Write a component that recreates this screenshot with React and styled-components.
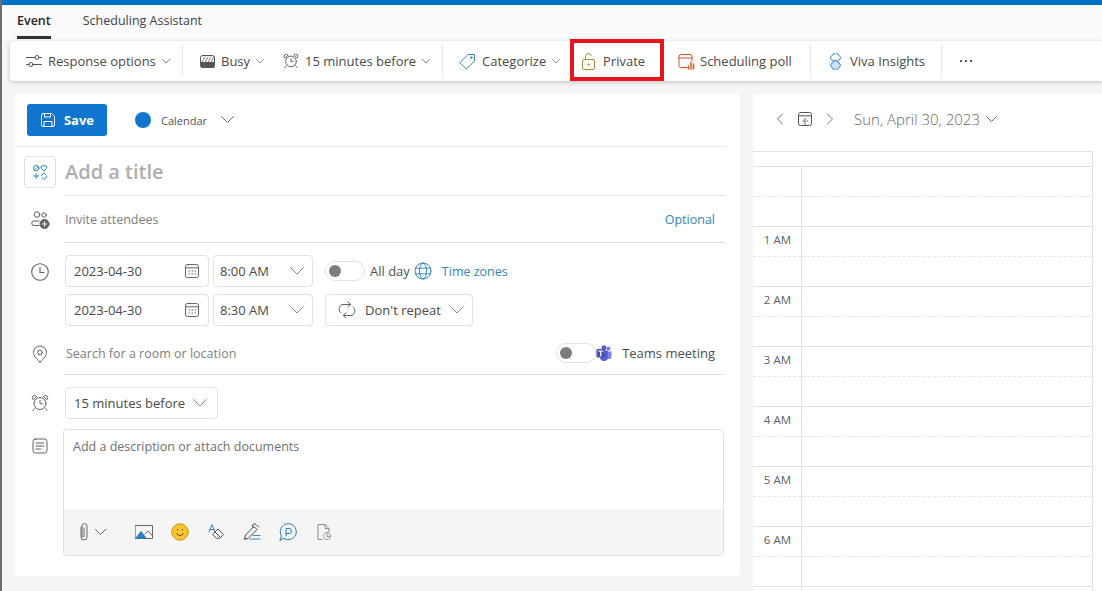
import React from 'react';
import styled, { createGlobalStyle } from 'styled-components';

const GlobalStyle = createGlobalStyle`
  html, body {
    margin: 0;
    padding: 0;
    background: #f5f5f5;
  }
  body {
    font-family: 'Open Sans', 'Noto Sans', sans-serif;
    color: #424242;
  }
`;

const Page = styled.div`
  width: 1102px;
  height: 591px;
  overflow: hidden;
  box-sizing: border-box;
  border-left: 2px solid #6d6d6d;
  background: #f5f5f5;
`;

const BlueBar = styled.div`
  height: 5px;
  background: #0072c6;
`;

const Header = styled.div`
  background: #fafafa;
  height: 36px;
  display: flex;
  padding-left: 15px;
  gap: 32px;
`;

const Tab = styled.div`
  height: 31px;
  line-height: 32px;
  font-size: 12.5px;
  color: ${p => (p.$active ? '#242424' : '#424242')};
  font-weight: ${p => (p.$active ? 600 : 400)};
  border-bottom: ${p => (p.$active ? '3px solid #333' : '3px solid transparent')};
`;

const Toolbar = styled.div`
  margin-left: 8px;
  height: 40px;
  background: #fff;
  border-radius: 4px 0 0 4px;
  box-shadow: 0 1px 4px rgba(0, 0, 0, 0.22);
  display: flex;
  align-items: center;
  padding-left: 16px;
  position: relative;
`;

const ToolItem = styled.div`
  display: flex;
  align-items: center;
  height: 100%;
  gap: 6px;
  font-size: 13px;
  color: #4a4a4a;
  white-space: nowrap;
  width: ${p => p.$w}px;
  margin-left: ${p => p.$ml || 0}px;
  flex: none;
`;

const Highlighted = styled(ToolItem)`
  position: relative;
  &::after {
    content: '';
    position: absolute;
    left: -12px;
    width: 94px;
    top: -2px;
    bottom: 0;
    box-sizing: border-box;
    border: 4px solid #e8141f;
  }
`;

const ToolSep = styled.div`
  width: 1px;
  height: 32px;
  background: #e6e6e6;
  flex: none;
  margin-left: ${p => p.$ml || 0}px;
`;

const Main = styled.div`
  display: flex;
  padding: 13px 0 0 13px;
  gap: 13px;
  align-items: flex-start;
`;

const FormCard = styled.div`
  width: 725px;
  height: 482px;
  background: #fff;
  border-radius: 4px;
  flex: none;
`;

const SaveRow = styled.div`
  height: 52px;
  box-sizing: border-box;
  padding: 10px 0 0 12px;
  border-bottom: 1px solid #e6e6e6;
  display: flex;
  align-items: flex-start;
  width: 710px;
  height: 53px;
`;

const SaveButton = styled.button`
  width: 80px;
  height: 32px;
  border: 0;
  border-radius: 3px;
  background: #0f75cf;
  color: #fff;
  font: 700 13px 'Open Sans', sans-serif;
  display: flex;
  align-items: center;
  justify-content: center;
  gap: 8px;
  padding: 0;
`;

const CalendarPick = styled.div`
  display: flex;
  align-items: center;
  height: 32px;
  margin-left: 28px;
  font-size: 11px;
  color: #555;
`;

const Dot = styled.span`
  width: 16px;
  height: 16px;
  border-radius: 50%;
  background: #0f75cf;
  margin-right: 10px;
`;

const Row = styled.div`
  display: flex;
  align-items: ${p => p.$align || 'center'};
`;

const IconCol = styled.div`
  width: 49px;
  flex: none;
  display: flex;
  justify-content: center;
  color: #616161;
`;

const TitleIcon = styled.div`
  width: 32px;
  height: 32px;
  box-sizing: border-box;
  border: 1px solid #e0e0e0;
  border-radius: 4px;
  display: flex;
  align-items: center;
  justify-content: center;
  margin-left: 1px;
`;

const LineField = styled.div`
  width: 661px;
  height: ${p => p.$h}px;
  box-sizing: border-box;
  border-bottom: 1px solid #e0e0e0;
  display: flex;
  align-items: center;
  justify-content: space-between;
  padding: 0 10px 0 1px;
`;

const TitleText = styled.div`
  font-size: 20px;
  font-weight: 600;
  color: #aeaeae;
`;

const Placeholder = styled.div`
  font-size: 12.5px;
  color: #808080;
  margin-left: ${p => p.$ml || 0}px;
`;

const LinkText = styled.div`
  font-size: 12.5px;
  color: #2f86bd;
`;

const Field = styled.div`
  width: ${p => p.$w}px;
  height: 32px;
  box-sizing: border-box;
  border: 1px solid #e2e2e2;
  border-radius: 4px;
  display: flex;
  align-items: center;
  justify-content: space-between;
  padding: 0 ${p => p.$pr || 8}px 0 ${p => p.$pl || 8}px;
  font-size: 13px;
  color: #4a4a4a;
  flex: none;
  margin-left: ${p => p.$ml || 0}px;
`;

const DateRows = styled.div`
  display: flex;
  flex-direction: column;
  gap: 7px;
  margin-top: 12px;
`;

const DateRow = styled.div`
  display: flex;
  align-items: center;
  gap: 4px;
  padding-left: 1px;
`;

const Toggle = styled.div`
  width: 40px;
  height: 20px;
  box-sizing: border-box;
  border: 1px solid #e2e2e2;
  border-radius: 10px;
  display: flex;
  align-items: center;
  padding-left: 3px;
  flex: none;
  margin-left: ${p => p.$ml || 0}px;
  &::before {
    content: '';
    width: 12px;
    height: 12px;
    border-radius: 50%;
    background: #7d7d7d;
  }
`;

const Plain = styled.div`
  font-size: 13px;
  color: #505050;
  margin-left: ${p => p.$ml || 0}px;
  white-space: nowrap;
`;

const RightGroup = styled.div`
  display: flex;
  align-items: center;
`;

const DescBox = styled.div`
  width: 661px;
  height: 127px;
  box-sizing: border-box;
  border: 1px solid #e0e0e0;
  border-radius: 4px;
  margin-left: -1px;
  display: flex;
  flex-direction: column;
  overflow: hidden;
`;

const DescText = styled.div`
  flex: 1;
  padding: 8px 9px;
  font-size: 12.5px;
  color: #707070;
`;

const DescTools = styled.div`
  height: 46px;
  background: #f5f5f5;
  display: flex;
  align-items: center;
  padding-left: 15px;
`;

const DescTool = styled.div`
  display: flex;
  align-items: center;
  justify-content: center;
  width: 36px;
  flex: none;
`;

const CalendarCard = styled.div`
  flex: 1;
  height: 520px;
  background: #fff;
  border-radius: 4px 0 0 0;
`;

const CalHeader = styled.div`
  height: 57px;
  box-sizing: border-box;
  display: flex;
  align-items: center;
  padding: 0 0 7px 14px;
  color: #707070;
`;

const DateTitle = styled.div`
  font-size: 15px;
  font-weight: 300;
  color: #6a6a6a;
  margin: 0 6px 0 12px;
`;

const NavIcon = styled.div`
  width: 25px;
  display: flex;
  justify-content: center;
`;

const Grid = styled.div`
  width: 339px;
  border-top: 1px solid #e0e0e0;
  border-right: 1px solid #e0e0e0;
`;

const GridHead = styled.div`
  height: 14px;
  border-bottom: 1px solid #e0e0e0;
`;

const HourRow = styled.div`
  display: flex;
  height: 60px;
  box-sizing: border-box;
  border-bottom: 1px solid #e0e0e0;
`;

const HourLabel = styled.div`
  width: 49px;
  box-sizing: border-box;
  flex: none;
  border-right: 1px solid #e0e0e0;
  text-align: right;
  padding: 5px 10px 0 0;
  font-size: 11.5px;
  color: #5f5f5f;
  position: relative;
  &::after {
    content: '';
    position: absolute;
    left: 0;
    right: 0;
    top: 29px;
    border-top: 1px dashed #e6e6e6;
  }
`;

const HalfCell = styled.div`
  flex: 1;
  height: 30px;
  box-sizing: border-box;
  border-bottom: 1px dashed #e6e6e6;
`;

const Svg = ({ size = 16, w, h, children, stroke = 'currentColor', sw = 1, vb }) => (
  <svg
    width={w || size}
    height={h || size}
    viewBox={vb || `0 0 ${w || size} ${h || size}`}
    fill="none"
    stroke={stroke}
    strokeWidth={sw}
    strokeLinecap="round"
    strokeLinejoin="round"
    style={{ flex: 'none', display: 'block' }}
  >
    {children}
  </svg>
);

const Chevron = ({ size = 8, color = '#8a8a8a' }) => (
  <Svg w={size} h={size / 2 + 1} stroke={color}>
    <path d={`M0.5 0.5 L${size / 2} ${size / 2} L${size - 0.5} 0.5`} />
  </Svg>
);

const FieldChevron = () => <Chevron size={14} color="#8c8c8c" />;

const AlarmIcon = ({ size = 18, color = '#555' }) => (
  <Svg size={18} stroke={color} w={size} h={size} vb="0 0 18 18">
    <circle cx="9" cy="9.5" r="6" />
    <path d="M9 6.5v3.2h2.4M3.6 14.5l-1.6 2M14.4 14.5l1.6 2" />
    <path d="M2 5.5a2.4 2.4 0 0 1 3.4-3.4zM16 5.5a2.4 2.4 0 0 0-3.4-3.4z" />
  </Svg>
);

const CalGlyph = () => (
  <Svg size={16} stroke="#666">
    <rect x="1.5" y="1.5" width="13" height="13" rx="2" />
    <path d="M1.5 4.8h13" />
    <path d="M5 8h.6M8 8h.6M11 8h.6M5 11h.6M8 11h.6M11 11h.6" strokeWidth="1.2" />
  </Svg>
);

const Hour = ({ label }) => (
  <HourRow>
    <HourLabel>{label}</HourLabel>
    <HalfCell />
  </HourRow>
);

export default function App() {
  return (
    <Page>
      <GlobalStyle />
      <BlueBar />
      <Header>
        <Tab $active>Event</Tab>
        <Tab>Scheduling Assistant</Tab>
      </Header>
      <Toolbar>
        <ToolItem $w={150}>
          <Svg size={16} stroke="#555">
            <path d="M0.5 4.5h8.5M13 4.5h2.5M0.5 11.5h2.5M7 11.5h8.5" />
            <circle cx="11" cy="4.5" r="2" />
            <circle cx="5" cy="11.5" r="2" />
          </Svg>
          <span>Response options</span>
          <Chevron />
        </ToolItem>
        <ToolSep $ml={6} />
        <ToolItem $w={68} $ml={17}>
          <Svg size={15} stroke="#555">
            <rect x="0.5" y="1.5" width="14" height="12" rx="2" />
            <path d="M0.5 8.5 L14.5 8.5" />
            <path d="M2 8 L5 3M5 8 L8 3M8 8 L11 3M11 8 L14 3" strokeWidth="0.8" />
            <path d="M1 9h13v3.5a1 1 0 0 1-1 1H2a1 1 0 0 1-1-1z" fill="#555" />
          </Svg>
          <span>Busy</span>
          <Chevron />
        </ToolItem>
        <ToolItem $w={153} $ml={15}>
          <AlarmIcon size={16} />
          <span>15 minutes before</span>
          <Chevron />
        </ToolItem>
        <ToolSep $ml={6} />
        <ToolItem $w={105} $ml={16}>
          <Svg size={17} stroke="#3b7fb5">
            <path d="M1.2 9.5 L9 1.5 H15.5 V8 L7.7 15.8 Z" />
            <circle cx="12.3" cy="4.6" r="0.9" />
          </Svg>
          <span>Categorize</span>
          <Chevron />
        </ToolItem>
        <Highlighted $w={82} $ml={18}>
          <Svg w={13} h={17} stroke="#b08a3c">
            <rect x="0.5" y="6.5" width="12" height="10" rx="1.5" />
            <path d="M3.5 6.5V3.5a3 3 0 0 1 5.8-1" />
            <circle cx="6.5" cy="11.5" r="0.6" fill="#8a6a20" />
          </Svg>
          <span style={{ marginLeft: 2 }}>Private</span>
        </Highlighted>
        <ToolItem $w={117} $ml={14}>
          <Svg size={17} stroke="#c8562a">
            <path d="M9 14.5H3a2 2 0 0 1-2-2V3.5a2 2 0 0 1 2-2h9a2 2 0 0 1 2 2V8" />
            <path d="M1 5h13" />
            <path d="M10.5 16v-3M13 16V9.5M15.5 16v-5" strokeWidth="1.6" stroke="#d9642b" />
          </Svg>
          <span style={{ marginLeft: -1 }}>Scheduling poll</span>
        </ToolItem>
        <ToolSep $ml={15} />
        <ToolItem $w={99} $ml={16}>
          <Svg size={17} stroke="#4a8fcf">
            <rect x="3" y="3" width="8" height="8" rx="2" transform="rotate(45 8.5 8.5) translate(-1.2 -1.2)" />
            <rect x="6" y="6" width="8" height="8" rx="2" transform="rotate(45 8.5 8.5) translate(1.2 1.2)" fill="#cfe2f5" />
          </Svg>
          <span>Viva Insights</span>
        </ToolItem>
        <ToolSep $ml={15} />
        <ToolItem $w={20} $ml={17}>
          <Svg w={14} h={4} stroke="#333" sw={0}>
            <circle cx="2" cy="2" r="1.1" fill="#333" />
            <circle cx="7" cy="2" r="1.1" fill="#333" />
            <circle cx="12" cy="2" r="1.1" fill="#333" />
          </Svg>
        </ToolItem>
      </Toolbar>
      <Main>
        <FormCard>
          <SaveRow>
            <SaveButton>
              <Svg size={16} stroke="#fff">
                <path d="M1.5 3a1.5 1.5 0 0 1 1.5-1.5h8.5l3 3V13a1.5 1.5 0 0 1-1.5 1.5H3A1.5 1.5 0 0 1 1.5 13z" />
                <path d="M4.5 1.5v3.5h6V1.5M4 14.5V9.5h8v5" />
              </Svg>
              Save
            </SaveButton>
            <CalendarPick>
              <Dot />
              Calendar
              <span style={{ marginLeft: 14 }}>
                <Chevron size={13} color="#666" />
              </span>
            </CalendarPick>
          </SaveRow>
          <Row>
            <IconCol>
              <TitleIcon>
                <Svg size={16} stroke="#2e86c1">
                  <circle cx="4.2" cy="4.2" r="2.7" />
                  <path d="M2.5 6l3.4-3.4" />
                  <path d="M11.8 7 9.2 4.2a1.6 1.6 0 0 1 2.6-2 1.6 1.6 0 0 1 2.6 2z" />
                  <path d="M4.2 9.5v5M1.7 12h5" />
                  <path d="M9.5 11.5a2.5 2.5 0 0 1 4.5-1M14.5 12a2.5 2.5 0 0 1-4.5 2" />
                </Svg>
              </TitleIcon>
            </IconCol>
            <LineField $h={49}>
              <TitleText>Add a title</TitleText>
            </LineField>
          </Row>
          <Row>
            <IconCol>
              <Svg size={20} stroke="#616161">
                <circle cx="7" cy="4.5" r="2.8" />
                <circle cx="14" cy="5" r="2.2" />
                <path d="M9 11H4a2 2 0 0 0 0 4.5h5" />
                <circle cx="14.5" cy="14" r="4.5" fill="#616161" />
                <path d="M14.5 11.8v4.4M12.3 14h4.4" stroke="#fff" />
              </Svg>
            </IconCol>
            <LineField $h={47}>
              <Placeholder>Invite attendees</Placeholder>
              <LinkText>Optional</LinkText>
            </LineField>
          </Row>
          <Row $align="flex-start">
            <IconCol style={{ paddingTop: 20 }}>
              <Svg size={18} stroke="#616161" sw={1.1}>
                <circle cx="9" cy="9" r="8.3" />
                <path d="M9 4.5V9.5h4" />
              </Svg>
            </IconCol>
            <DateRows>
              <DateRow>
                <Field $w={144}>
                  2023-04-30
                  <CalGlyph />
                </Field>
                <Field $w={100} $pl={6} $pr={8}>
                  8:00 AM
                  <FieldChevron />
                </Field>
                <Toggle $ml={8} />
                <Plain $ml={1}>All day</Plain>
                <Svg size={18} stroke="#3a87bd">
                  <circle cx="9" cy="9" r="8" />
                  <ellipse cx="9" cy="9" rx="3.5" ry="8" />
                  <path d="M1.5 6.2h15M1.5 11.8h15" />
                </Svg>
                <LinkText style={{ marginLeft: 6 }}>Time zones</LinkText>
              </DateRow>
              <DateRow>
                <Field $w={144}>
                  2023-04-30
                  <CalGlyph />
                </Field>
                <Field $w={100} $pl={6} $pr={8}>
                  8:30 AM
                  <FieldChevron />
                </Field>
                <Field $w={148} $ml={8} $pl={12} $pr={8}>
                  <Svg size={18} stroke="#666">
                    <path d="M3 12a5 5 0 0 1 1-8.5h8.5M10 1l2.8 2.5L10 6" />
                    <path d="M15 6a5 5 0 0 1-1 8.5H5.5M8 17l-2.800-2.500L8 12" />
                  </Svg>
                  <span>Don't repeat</span>
                  <FieldChevron />
                </Field>
              </DateRow>
            </DateRows>
          </Row>
          <Row style={{ marginTop: 6 }}>
            <IconCol>
              <Svg w={16} h={18} stroke="#616161">
                <path d="M8 17 C4 13.500 1.500 10.500 1.500 7.500 a6.500 6.500 0 0 1 13 0 C14.500 10.500 12 13.500 8 17Z" />
                <circle cx="8" cy="7.500" r="2.300" />
              </Svg>
            </IconCol>
            <LineField $h={43}>
              <Placeholder $ml={1}>Search for a room or location</Placeholder>
              <RightGroup>
                <Toggle />
                <Svg size={16} sw={0} stroke="none">
                  <circle cx="12.500" cy="3.500" r="2" fill="#7b83eb" />
                  <path d="M10 6.500h5.500v5a2.500 2.500 0 0 1-5 0z" fill="#7b83eb" />
                  <circle cx="8" cy="2.800" r="2.500" fill="#5b5fc7" />
                  <path d="M4 5.500h8v6.500a4 4 0 0 1-8 0z" fill="#5b5fc7" />
                  <rect x="0.500" y="4" width="8.500" height="8.500" rx="1" fill="#464eb8" />
                  <path d="M2.500 6h4.500M4.750 6v5" stroke="#fff" strokeWidth="1.200" />
                </Svg>
                <Plain $ml={10}>Teams meeting</Plain>
              </RightGroup>
            </LineField>
          </Row>
          <Row style={{ marginTop: 12 }}>
            <IconCol>
              <AlarmIcon size={18} color="#616161" />
            </IconCol>
            <Field $w={153} $ml={1} $pl={8} $pr={10}>
              15 minutes before
              <FieldChevron />
            </Field>
          </Row>
          <Row $align="flex-start" style={{ marginTop: 10 }}>
            <IconCol style={{ paddingTop: 9 }}>
              <Svg size={16} stroke="#616161">
                <rect x="1" y="1" width="14" height="14" rx="2.500" />
                <path d="M4 5h8M4 8h8M4 11h5" />
              </Svg>
            </IconCol>
            <DescBox>
              <DescText>Add a description or attach documents</DescText>
              <DescTools>
                <Svg w={10} h={20} stroke="#666" sw={1}>
                  <path d="M2 5v10a3 3 0 0 0 6 0V4a2.500 2.500 0 0 0-5 0v10a1 1 0 0 0 2 0V6" />
                </Svg>
                <span style={{ marginLeft: 6, marginRight: 20 }}>
                  <Chevron size={11} color="#666" />
                </span>
                <DescTool>
                  <Svg w={18} h={14} stroke="#666">
                    <rect x="0.500" y="0.500" width="17" height="13" />
                    <path d="M1 13 L6 6.500 L11 13Z" fill="#2a7fc1" stroke="#2a7fc1" />
                    <path d="M10 9l3-3 4.500 5" />
                  </Svg>
                </DescTool>
                <DescTool>
                  <Svg size={18} stroke="#c79a14">
                    <circle cx="9" cy="9" r="8.300" fill="#f7c531" />
                    <path d="M5.500 10.500a4 4 0 0 0 7 0" stroke="#7a5a00" />
                    <circle cx="6.500" cy="6.800" r="0.800" fill="#7a5a00" stroke="none" />
                    <circle cx="11.500" cy="6.800" r="0.800" fill="#7a5a00" stroke="none" />
                  </Svg>
                </DescTool>
                <DescTool>
                  <Svg size={18} stroke="#3a87bd">
                    <path d="M2 9 L5 1.500 L8 9M3 6.500h4" />
                    <path d="M9 15 L5.500 11.500 L11 6 L16.500 11.500 L13 15Z" stroke="#555" />
                    <path d="M8 9 L13.500 14.500" stroke="#555" />
                  </Svg>
                </DescTool>
                <DescTool>
                  <Svg size={20} stroke="#444">
                    <path d="M2.500 17 L3.500 13 L12 4.500 L15 7.500 L6.500 16Z" />
                    <path d="M11 5.500 a2 2 0 0 1 3-3 l2.500 2.500" />
                    <path d="M8 17h10M11 13.500h7" stroke="#3a87bd" />
                  </Svg>
                </DescTool>
                <DescTool>
                  <Svg size={18} stroke="#1f7fc0">
                    <path d="M1 17 L2.500 13 A8 8 0 1 1 5 15.500Z" />
                    <path d="M7 13V5.500h3a2.500 2.500 0 0 1 0 5H7" />
                  </Svg>
                </DescTool>
                <DescTool>
                  <Svg size={18} stroke="#8a8a8a">
                    <path d="M7 16.500H3V1.500h7l4 4v3" />
                    <path d="M10 1.500v4h4" />
                    <circle cx="12" cy="13" r="3.500" strokeDasharray="2 1.200" />
                    <path d="M12 11v2.500h2" />
                  </Svg>
                </DescTool>
              </DescTools>
            </DescBox>
          </Row>
        </FormCard>
        <CalendarCard>
          <CalHeader>
            <NavIcon>
              <Svg w={8} h={12} stroke="#707070">
                <path d="M6.500 1 L1.500 6 L6.500 11" />
              </Svg>
            </NavIcon>
            <NavIcon>
              <Svg size={16} stroke="#555">
                <rect x="1.500" y="1.500" width="13" height="13" rx="2" />
                <path d="M1.500 4.800h13M8 7.500v6M6 10h.6M10 10h.6" />
              </Svg>
            </NavIcon>
            <NavIcon>
              <Svg w={8} h={12} stroke="#707070">
                <path d="M1.500 1 L6.500 6 L1.500 11" />
              </Svg>
            </NavIcon>
            <DateTitle>Sun, April 30, 2023</DateTitle>
            <Chevron size={11} color="#707070" />
          </CalHeader>
          <Grid>
            <GridHead />
            {['', '1 AM', '2 AM', '3 AM', '4 AM', '5 AM', '6 AM', ''].map((label, i) => (
              <Hour key={i} label={label} />
            ))}
          </Grid>
        </CalendarCard>
      </Main>
    </Page>
  );
}
